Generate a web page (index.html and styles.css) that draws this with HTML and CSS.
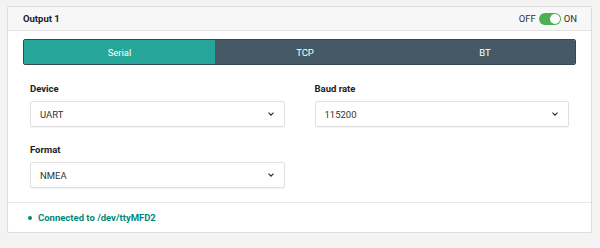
FILE: index.html
```html
<!DOCTYPE html>
<html lang="en">
<head>
    <meta charset="UTF-8">
    <meta name="viewport" content="width=device-width, initial-scale=1.0">
    <title>Output 1</title>
    <link rel="stylesheet" href="styles.css">
</head>
<body>
    <div class="card">
        <div class="card-header">
            <span class="title">Output 1</span>
            <div class="toggle">
                <span>OFF</span>
                <span class="switch"><span class="knob"></span></span>
                <span>ON</span>
            </div>
        </div>

        <div class="card-body">
            <div class="tabs">
                <div class="tab active">Serial</div>
                <div class="tab">TCP</div>
                <div class="tab">BT</div>
            </div>

            <div class="form">
                <div class="field">
                    <label>Device</label>
                    <div class="select"><span>UART</span><svg class="chev" width="6" height="4" viewBox="0 0 6 4"><polyline points="0.5,0.6 3,3.2 5.5,0.6" fill="none" stroke="#1e2a44" stroke-width="1.1"/></svg></div>
                </div>
                <div class="field">
                    <label>Baud rate</label>
                    <div class="select"><span>115200</span><svg class="chev" width="6" height="4" viewBox="0 0 6 4"><polyline points="0.5,0.6 3,3.2 5.5,0.6" fill="none" stroke="#1e2a44" stroke-width="1.1"/></svg></div>
                </div>
                <div class="field">
                    <label>Format</label>
                    <div class="select"><span>NMEA</span><svg class="chev" width="6" height="4" viewBox="0 0 6 4"><polyline points="0.5,0.6 3,3.2 5.5,0.6" fill="none" stroke="#1e2a44" stroke-width="1.1"/></svg></div>
                </div>
            </div>
        </div>

        <div class="card-footer">
            <span class="dot"></span>
            <span class="status">Connected to /dev/ttyMFD2</span>
        </div>
    </div>
</body>
</html>
```

FILE: styles.css
```css
body { margin: 0; background: #f3f3f3; font-family: Roboto, "Liberation Sans", sans-serif; color: #212121; }
.card { margin: 6px 8px 0 7px; background: #fff; border: 1px solid #ddd; border-radius: 2px; box-shadow: 0 1px 1px rgba(0,0,0,0.06); }

.card-header { height: 23px; display: flex; align-items: center; justify-content: space-between; padding: 0 14px 0 15px; background: #f7f7f7; border-bottom: 1px solid #e3e3e3; }
.title { font-size: 9.5px; font-weight: 700; }
.toggle { display: flex; align-items: center; gap: 3px; font-size: 9.5px; color: #333; }
.switch { width: 22px; height: 12px; border-radius: 6px; background: #4caf50; position: relative; }
.knob { position: absolute; right: 1px; top: 1px; width: 10px; height: 10px; border-radius: 50%; background: #fff; }

.card-body { padding: 8px 15px 14px; border-bottom: 1px solid #e6e6e6; }
.tabs { display: grid; grid-template-columns: 191px 1fr 1fr; height: 26px; border: 1px solid #37474f; border-radius: 2px; overflow: hidden; box-sizing: border-box; }
.tab { display: flex; align-items: center; justify-content: center; background: #455a64; color: #fff; font-size: 9.5px; }
.tab.active { background: #26a69a; }

.form { display: grid; grid-template-columns: 1fr 1fr; column-gap: 30px; row-gap: 16px; padding: 17px 7px 0; }
.field label { display: block; font-size: 9.5px; font-weight: 700; line-height: 14px; margin-bottom: 5px; }
.select { height: 26px; box-sizing: border-box; border: 1px solid #e0e0e0; border-radius: 2px; box-shadow: 0 1px 1px rgba(0,0,0,0.05); display: flex; align-items: center; justify-content: space-between; padding: 0 10px 0 9px; font-size: 9.5px; color: #333; }
.chev { display: block; }

.card-footer { height: 29px; display: flex; align-items: center; padding: 0 20px; gap: 6px; }
.dot { width: 4px; height: 4px; border-radius: 50%; background: #00897b; }
.status { font-size: 9.5px; font-weight: 700; color: #00897b; }
```
